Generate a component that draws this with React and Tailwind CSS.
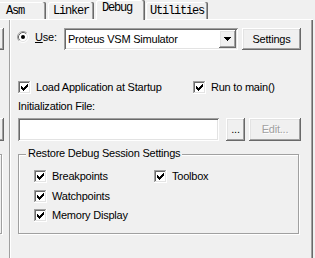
import React from "react";

const sunken =
  "shadow-[inset_1px_1px_0_#a0a0a0,inset_-1px_-1px_0_#ffffff,inset_2px_2px_0_#696969,inset_-2px_-2px_0_#e3e3e3]";
const raised =
  "shadow-[inset_-1px_-1px_0_#696969,inset_1px_1px_0_#ffffff,inset_-2px_-2px_0_#a0a0a0,inset_2px_2px_0_#e3e3e3]";
const tabShadow =
  "shadow-[inset_-1px_0_0_#696969,inset_-2px_0_0_#a0a0a0,inset_1px_1px_0_#ffffff]";
const txt = "text-[11px] leading-[13px] tracking-[-0.22px] text-black whitespace-nowrap";

function CheckBox() {
  return (
    <svg width="13" height="13" viewBox="0 0 13 13" shapeRendering="crispEdges" className="shrink-0">
      <rect x="0" y="0" width="13" height="13" fill="#fff" />
      <path d="M0 0h12v1H0z M0 0h1v12H0z" fill="#a0a0a0" />
      <path d="M1 1h10v1H1z M1 1h1v10H1z" fill="#696969" />
      <path d="M0 12h13v1H0z M12 0h1v13h-1z" fill="#fff" />
      <path d="M1 11h11v1H1z M11 1h1v11h-1z" fill="#e3e3e3" />
      <path
        d="M9 3h1v1H9z M8 4h2v1H8z M3 5h1v1H3z M7 5h3v1H7z M3 6h2v1H3z M6 6h3v1H6z M3 7h5v1H3z M4 8h3v1H4z M5 9h1v1H5z"
        fill="#000"
      />
    </svg>
  );
}

function Radio() {
  return (
    <svg width="12" height="12" viewBox="0 0 12 12" className="shrink-0">
      <circle cx="6" cy="6" r="5" fill="#fff" />
      <path d="M2.11 9.89A5.5 5.5 0 0 1 9.89 2.11" stroke="#a0a0a0" fill="none" />
      <path d="M9.89 2.11A5.5 5.5 0 0 1 2.11 9.89" stroke="#ffffff" fill="none" />
      <path d="M2.82 9.18A4.5 4.5 0 0 1 9.18 2.82" stroke="#696969" fill="none" />
      <path d="M9.18 2.82A4.5 4.5 0 0 1 2.82 9.18" stroke="#e3e3e3" fill="none" />
      <circle cx="6" cy="6" r="2" fill="#000" />
    </svg>
  );
}

function Check({ label, className = "" }) {
  return (
    <div className={`flex items-center h-[13px] ${className}`}>
      <CheckBox />
      <span className={`${txt} ml-[5px]`}>{label}</span>
    </div>
  );
}

export default function App() {
  return (
    <div className="w-[315px] h-[258px] bg-[#f0f0f0] overflow-hidden font-['Liberation_Sans',Arial,sans-serif]">
      {/* Tab strip */}
      <div className="flex items-end h-[19px] font-['Liberation_Mono','Courier_New',monospace] text-[12px] leading-[12px] tracking-[-1.2px] text-black">
        <div className={`ml-[-10px] w-[56px] h-[17px] pl-[16px] pt-[3px] rounded-t-[2px] ${tabShadow}`}>Asm</div>
        <div className={`ml-[2px] w-[46px] h-[17px] pl-[5px] pt-[3px] rounded-t-[2px] ${tabShadow}`}>Linker</div>
        <div className={`relative z-10 ml-[2px] mb-[-1px] w-[49px] h-[20px] pl-[6px] pt-[2px] bg-[#f0f0f0] rounded-t-[2px] ${tabShadow}`}>
          Debug
        </div>
        <div className={`ml-[1px] w-[62px] h-[17px] pl-[4px] pt-[3px] rounded-t-[2px] ${tabShadow}`}>Utilities</div>
      </div>

      {/* Panel */}
      <div className="flex w-[313px] h-[239px] border-t border-white">
        {/* Cut-off left half */}
        <div className="w-[9px] flex flex-col">
          <div className="mt-[8px] w-[4px] h-[22px] shadow-[inset_-1px_-1px_0_#696969,inset_0_1px_0_#ffffff,inset_-2px_-2px_0_#a0a0a0]" />
          <div className="mt-[68px] w-[4px] h-[23px] shadow-[inset_-1px_-1px_0_#696969,inset_0_1px_0_#ffffff,inset_-2px_-2px_0_#a0a0a0]" />
          <div className="mt-[13px] w-[2px] h-[80px] border-t border-r border-b border-[#a0a0a0] shadow-[1px_1px_0_#ffffff,inset_0_1px_0_#ffffff]" />
        </div>
        {/* Divider */}
        <div className="w-[2px] border-l border-[#a0a0a0] border-r border-r-white" />

        {/* Content */}
        <div className="flex-1 flex flex-col pl-[7px]">
          {/* Row 1 */}
          <div className="mt-[8px] flex items-start h-[22px]">
            <div className="ml-[-1px] mt-[3px]">
              <Radio />
            </div>
            <div className={`${txt} ml-[6px] mt-[3px] w-[29px]`}>
              <span className="underline underline-offset-[1px]">U</span>se:
            </div>
            <div className={`w-[174px] h-[22px] bg-white flex items-center ${sunken} p-[2px]`}>
              <span className={`${txt} flex-1 pl-[2px]`}>Proteus VSM Simulator</span>
              <div className={`w-[17px] h-[18px] bg-[#f0f0f0] flex items-center justify-center ${raised}`}>
                <svg width="7" height="4" viewBox="0 0 7 4" shapeRendering="crispEdges">
                  <path d="M0 0h7v1H0z M1 1h5v1H1z M2 2h3v1H2z M3 3h1v1H3z" fill="#000" />
                </svg>
              </div>
            </div>
            <div className={`ml-[4px] w-[59px] h-[22px] flex items-center justify-center ${raised} ${txt}`}>
              Settings
            </div>
          </div>

          {/* Row 2 */}
          <div className="mt-[31px] flex items-center h-[13px]">
            <Check label="Load Application at Startup" className="w-[175px]" />
            <Check label="Run to main()" />
          </div>

          {/* Initialization file */}
          <div className={`${txt} mt-[6px]`}>Initialization File:</div>
          <div className="mt-[5px] flex h-[23px]">
            <div className={`w-[201px] h-[23px] bg-white ${sunken}`} />
            <div className={`ml-[7px] w-[19px] h-[23px] flex items-center justify-center ${raised} ${txt}`}>...</div>
            <div
              className={`ml-[4px] w-[52px] h-[23px] flex items-center justify-center ${raised} text-[11px] leading-[13px] tracking-[-0.22px] text-[#a0a0a0] [text-shadow:1px_1px_0_#ffffff]`}
            >
              Edit...
            </div>
          </div>

          {/* Group box */}
          <div className="relative mt-[13px] w-[281px] h-[80px] border border-[#a0a0a0] shadow-[1px_1px_0_#ffffff,inset_1px_1px_0_#ffffff] pl-[15px] pt-[15px]">
            <div className={`absolute left-[7px] top-[-8px] px-[2px] bg-[#f0f0f0] ${txt}`}>
              Restore Debug Session Settings
            </div>
            <div className="flex">
              <Check label="Breakpoints" className="w-[120px]" />
              <Check label="Toolbox" />
            </div>
            <Check label="Watchpoints" className="mt-[7px]" />
            <Check label="Memory Display" className="mt-[6px]" />
          </div>
        </div>

        {/* Right edge */}
        <div className="w-[2px] border-l border-[#a0a0a0] border-r border-r-[#696969]" />
      </div>
    </div>
  );
}
